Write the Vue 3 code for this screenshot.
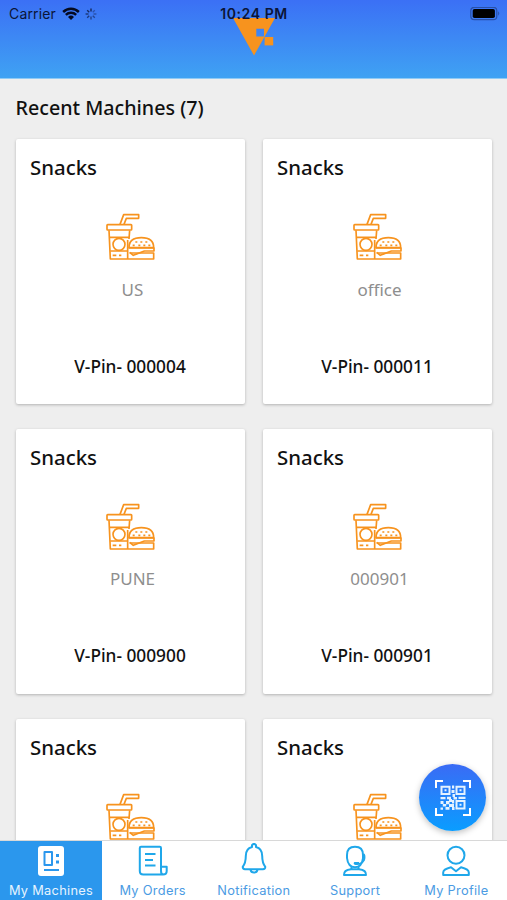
<template>
  <div class="app">
    <header class="header">
      <div class="status-bar">
        <div class="status-left">
          <span class="carrier">Carrier</span>
          <svg class="wifi" viewBox="0 0 18 13">
            <path d="M0.3 4.1 A12.5 12.5 0 0 1 17.7 4.1 L16 5.9 A10 10 0 0 0 2 5.9 Z" />
            <path d="M3 7 A8.6 8.6 0 0 1 15 7 L13.3 8.7 A6.1 6.1 0 0 0 4.7 8.7 Z" />
            <path d="M6 9.9 A4.3 4.3 0 0 1 12 9.9 L9 12.9 Z" />
          </svg>
          <svg class="spinner" viewBox="-6 -6 12 12">
            <line
              v-for="n in 8"
              :key="n"
              x1="0"
              y1="-2.5"
              x2="0"
              y2="-5.4"
              :opacity="0.3 + n * 0.07"
              :transform="`rotate(${n * 45})`"
            />
          </svg>
        </div>
        <span class="time">10:24 PM</span>
        <svg class="battery" viewBox="0 0 31 14">
          <rect class="battery-shell" x="0.8" y="0.3" width="26" height="12.4" rx="3.5" />
          <rect x="2.7" y="2" width="22.2" height="9" rx="1.8" />
          <path class="battery-cap" d="M28.2 4.3 Q30.3 6.5 28.2 8.7 Z" />
        </svg>
      </div>
      <svg class="logo" viewBox="0 0 42 38">
        <path fill-rule="evenodd" d="M0 0 H42 L21 37.5 Z M23.3 10.8 V18.4 H31 V10.8 Z" />
        <rect x="31.6" y="19" width="8.6" height="8.4" />
      </svg>
    </header>

    <main class="content">
      <h1 class="heading">Recent Machines ({{ total }})</h1>
      <div class="machines">
        <article v-for="(machine, i) in machines" :key="i" class="card">
          <h2 class="card-title">Snacks</h2>
          <svg class="snack-icon" viewBox="48 39 150 144">
            <path d="M90 73 L101 44 H146 V55 H109 L102 73" />
            <rect x="51" y="74" width="74" height="16" rx="2" />
            <path d="M57 91 L61 177 H191 V159 H119 M119 91 L117 117 M113 120 V177" />
            <path d="M58 112 H117 M61 153 H113" />
            <circle cx="87" cy="133" r="18" />
            <path d="M117 143 C117 123 129 113 154 113 C179 113 191 123 191 143 Z" />
            <path d="M116 144 H192 V153 H163 L130 166 L119 157" />
            <path d="M68 166 H79 M87 166 H94 M136 126 H142 M151 126 H157 M166 126 H172 M128 136 H134 M145 136 H151 M160 136 H166 M175 136 H181" />
          </svg>
          <p class="place">{{ machine.place }}</p>
          <p class="pin">{{ machine.pin }}</p>
        </article>
      </div>
    </main>

    <button class="scan-btn" aria-label="Scan">
      <svg viewBox="0 0 36 36">
        <path class="frame" d="M1 8 V1 H8 M28 1 H35 V8 M35 28 V35 H28 M8 35 H1 V28" />
        <path class="finder" d="M6.5 6.7 H14.5 V14 H6.5 Z M21.5 6.7 H29.5 V14 H21.5 Z M21.5 21 H29.5 V28.5 H21.5 Z" />
        <path
          class="dots"
          d="M9.5 9.3h2v2h-2z M24.5 9.3h2v2h-2z M24.5 23.7h2v2h-2z
            M17 5.5h2.2v3h-2.2z M16.5 10h3v3h-3z M17.5 14h2.5v3h-2.5z M5.5 17h5v2.2h-5z
            M12 16.8h4v2.5h-4z M18.5 17h3.5v2.5h-3.5z M23.5 16.8h7v2.2h-7z M14 19h3v3h-3z
            M11 21h3.5v3.2h-3.5z M5.5 21h3v3h-3z M17 20h2.2v3.5h-2.2z M7.8 24h3.4v2.5h-3.4z
            M14 24h5v3h-5z M10.5 27h4v2.8h-4z M17 27h2.5v3h-2.5z M5.5 27.5h2.5v2.3h-2.5z"
        />
      </svg>
    </button>

    <nav class="tabs">
      <a class="tab active">
        <svg viewBox="0 0 36 36">
          <rect x="5" y="3" width="26" height="30" rx="3" fill="#fff" stroke="none" />
          <path class="cutout" d="M11.5 9 H19 V22 H11.5 Z M11 27 H26" />
          <path class="cutout" d="M23 12.5 H26 M23 19 H26" stroke-width="3" />
        </svg>
        <span>My Machines</span>
      </a>
      <a class="tab">
        <svg viewBox="0 0 36 36">
          <path d="M26 23.5 V5 Q26 3.8 24.8 3.8 H6 Q4.8 3.8 4.8 5 V28 Q4.8 31.5 8.3 31.5 H28 Q31.7 31.5 31.7 28 V23.8 H26 V28 Q26 31.5 28.5 31.5" />
          <path d="M10 11 H20.5 M10 17 H18 M10 22.5 H20.5" />
        </svg>
        <span>My Orders</span>
      </a>
      <a class="tab">
        <svg viewBox="0 0 36 36">
          <path d="M16 4 V2.2 Q18 -0.4 20 2.2 V4 C25 5.2 26.2 9 26.2 13 C26.2 19 27 21 29.3 23.8 Q29.3 26.2 27 26.2 H9 Q6.7 26.2 6.7 23.8 C9 21 9.8 19 9.8 13 C9.8 9 11 5.2 16 4 Z" />
          <path d="M14.5 26.5 Q15 29.5 18 29.5 Q21 29.5 21.5 26.5" />
        </svg>
        <span>Notification</span>
      </a>
      <a class="tab">
        <svg viewBox="0 0 36 36">
          <path d="M10 12 Q10 3.8 18 3.8 Q26 3.8 26 12 V15 Q25 24.2 18 24.2 Q11 24.2 10 15 Z" />
          <path d="M26.4 11 Q28.2 12 27 17 L25.5 19 Q24 21.3 19 21 Q17 20.5 18 20 H22 M14.5 23.5 V26 M21.5 23.5 V26" />
          <path d="M7 32 Q6.7 27 14 26.3 H22 Q29.3 27 29 32 Z" />
        </svg>
        <span>Support</span>
      </a>
      <a class="tab">
        <svg viewBox="0 0 36 36">
          <circle cx="18" cy="12.3" r="8.5" />
          <path d="M5.2 32 V29.5 Q5.2 26.2 13 24.3 L18 28.2 L23 24.3 Q30.8 26.2 30.8 29.5 V32 Z" />
        </svg>
        <span>My Profile</span>
      </a>
    </nav>
  </div>
</template>

<script setup>
const total = 7;

const machines = [
  { place: 'US', pin: 'V-Pin- 000004' },
  { place: 'office', pin: 'V-Pin- 000011' },
  { place: 'PUNE', pin: 'V-Pin- 000900' },
  { place: '000901', pin: 'V-Pin- 000901' },
  // the last row is cut off by the tab bar
  { place: '', pin: '' },
  { place: '', pin: '' }
];
</script>

<style>
body {
  margin: 0;
}
</style>

<style scoped>
.app {
  position: relative;
  height: 900px;
  display: flex;
  flex-direction: column;
  overflow: hidden;
  background: #eee;
  font-family: "Noto Sans", "Open Sans", sans-serif;
  color: #111;
}

.header {
  height: 79px;
  flex-shrink: 0;
  box-sizing: border-box;
  border-bottom: 1px solid #8fcaf5;
  background: linear-gradient(#3b70f5, #3fa2f3);
  display: flex;
  flex-direction: column;
  align-items: center;
}

.status-bar {
  position: relative;
  z-index: 1;
  width: 100%;
  height: 18px;
  padding: 5px 6px 0 9px;
  box-sizing: border-box;
  display: grid;
  grid-template-columns: 1fr auto 1fr;
  align-items: center;
  font-family: Inter, sans-serif;
  font-size: 14px;
  line-height: 18px;
  color: #0b1538;
}

.status-left {
  display: flex;
  align-items: center;
}

.carrier {
  letter-spacing: 0.15px;
}

.wifi {
  width: 18px;
  height: 13px;
  margin: -1px 0 0 6px;
  fill: #050a20;
}

.spinner {
  width: 12px;
  height: 12px;
  margin: -1px 0 0 5px;
  stroke: #0b1538;
  stroke-width: 1.3;
}

.time {
  font-weight: 600;
  font-size: 14px;
  letter-spacing: 0.6px;
  margin-right: 2px;
}

.battery {
  width: 31px;
  height: 14px;
  justify-self: end;
  fill: #000;
}

.battery-shell {
  fill: none;
  stroke: #2950a8;
  stroke-width: 1.2;
}

.battery-cap {
  fill: #2950a8;
}

.logo {
  width: 42px;
  height: 38px;
  flex-shrink: 0;
  margin-left: 1px;
  fill: #f7931e;
}

.content {
  flex: 1;
  min-height: 0;
  overflow: hidden;
  padding: 0 15px 0 15.5px;
}

.heading {
  margin: 15px 0 18px;
  font-size: 19.7px;
  line-height: 27px;
  font-weight: 500;
}

.machines {
  display: grid;
  grid-template-columns: 1fr 1fr;
  gap: 25px 17.5px;
}

.card {
  height: 264.8px;
  box-sizing: border-box;
  padding: 14px 15px 15px 14.5px;
  background: #fff;
  border-radius: 2px;
  box-shadow: 0 1px 3px rgba(0, 0, 0, 0.25);
  display: flex;
  flex-direction: column;
  align-items: center;
}

.card-title {
  align-self: flex-start;
  margin: 0;
  font-size: 20.4px;
  line-height: 28px;
  font-weight: 500;
}

.snack-icon {
  width: 50px;
  height: 48px;
  flex-shrink: 0;
  margin: 32px 0 0 1.5px;
  fill: none;
  stroke: #f7931e;
  stroke-width: 5;
  stroke-linejoin: round;
}

.place {
  margin: 15.5px 0 0 5px;
  height: 26px;
  font-size: 17px;
  line-height: 26px;
  color: #8e8e8e;
}

.pin {
  margin: 51px 0 0;
  font-size: 17.3px;
  line-height: 26px;
  font-weight: 500;
}

/* floats above the cards */
.scan-btn {
  position: absolute;
  right: 21px;
  bottom: 69px;
  width: 67px;
  height: 67px;
  padding: 0;
  border: none;
  border-radius: 50%;
  background: linear-gradient(#3a6bf5, #0a9dff);
  box-shadow: 0 2px 6px rgba(0, 0, 0, 0.25);
  display: flex;
  justify-content: center;
  align-items: center;
}

.scan-btn svg {
  width: 36px;
  height: 36px;
}

.frame,
.finder {
  fill: none;
  stroke: #fff;
  stroke-width: 2;
}

.finder {
  stroke: #e4f2ff;
}

.dots {
  fill: #e4f2ff;
}

.tabs {
  height: 60px;
  flex-shrink: 0;
  box-sizing: border-box;
  border-top: 1px solid #d8d8d8;
  background: #fff;
  display: grid;
  grid-template-columns: 102px repeat(4, 1fr);
}

.tab {
  display: flex;
  flex-direction: column;
  align-items: center;
  font-family: Inter, sans-serif;
  font-size: 12.8px;
  line-height: 16px;
  letter-spacing: 0.3px;
  color: #4b9be3;
  white-space: nowrap;
}

.tab svg {
  width: 36px;
  height: 36px;
  margin: 2px 0 4px;
  fill: none;
  stroke: #1fa7ea;
  stroke-width: 2;
  stroke-linejoin: round;
}

.tab.active {
  background: #2b97ed;
  color: #e6f4ff;
}

.tab.active .cutout {
  stroke: #2b97ed;
}
</style>
